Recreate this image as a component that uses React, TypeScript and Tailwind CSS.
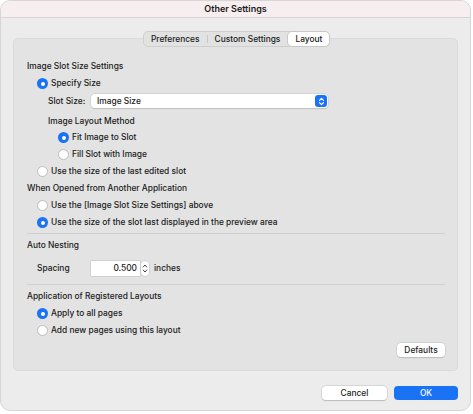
import React from 'react'

const font = { fontFamily: 'Inter, "Liberation Sans", sans-serif' }

function Radio({ checked }: { checked?: boolean }) {
  if (checked) {
    return (
      <span className="w-[11px] h-[11px] rounded-full bg-[#1a73f5] flex items-center justify-center shrink-0">
        <span className="w-[4px] h-[4px] rounded-full bg-white" />
      </span>
    )
  }
  return <span className="w-[11px] h-[11px] rounded-full bg-white border border-[#bdbdbd] shrink-0" />
}

function RadioRow({ label, checked, indent }: { label: string; checked?: boolean; indent: string }) {
  return (
    <div className={`flex items-center gap-[3px] h-[17px] whitespace-nowrap ${indent}`}>
      <Radio checked={checked} />
      <span>{label}</span>
    </div>
  )
}

function Button({ children, primary, className }: { children: React.ReactNode; primary?: boolean; className?: string }) {
  return (
    <div
      className={`h-[14px] rounded-[4px] flex items-center justify-center font-medium ${
        primary
          ? 'bg-[#1a73f5] text-white'
          : 'bg-white text-[#1d1d1d] shadow-[0_0_0_0.5px_#c4c4c4,0_0.5px_1px_#b8b8b8]'
      } ${className ?? ''}`}
    >
      {children}
    </div>
  )
}

export default function App() {
  return (
    <div className="w-[473px] h-[414px] bg-white text-[#1a1a1a] text-[8.4px] font-medium" style={font}>
      <div className="w-[471px] h-[411px] rounded-[10px] bg-[#ececec] border border-[#d6d6d6] overflow-hidden flex flex-col">
        {/* Title bar */}
        <div className="h-[17px] bg-[#f7efef] border-b border-[#d8d4d4] flex items-center justify-center font-semibold text-[9px]">
          Other Settings
        </div>

        <div className="relative flex-1 px-[12px] pt-[20px]">
          {/* Tabs */}
          <div className="absolute left-[142px] top-[13px] h-[16px] flex items-center rounded-[5px] bg-[#e2e2e2] border border-[#cfcfcf] z-10 whitespace-nowrap">
            <span className="px-[7px]">Preferences</span>
            <span className="w-px h-[8px] bg-[#c8c8c8]" />
            <span className="px-[7px]">Custom Settings</span>
            <span className="h-[16px] -my-px -mr-px px-[7px] flex items-center rounded-[5px] bg-white border border-[#c8c8c8]">Layout</span>
          </div>

          {/* Group box */}
          <div className="h-[333px] rounded-[5px] bg-[#e3e3e3] border border-[#dadada] pl-[13px] pr-[12px] pt-[19px] flex flex-col">
            <div className="h-[17px] flex items-center">Image Slot Size Settings</div>
            <RadioRow indent="pl-[10px]" checked label="Specify Size" />
            <div className="flex items-center h-[18px] pl-[21px] whitespace-nowrap">
              <span className="w-[43px]">Slot Size:</span>
              <div className="w-[237px] h-[14px] rounded-[4px] bg-white shadow-[0_0_0_0.5px_#c6c6c6,0_0.5px_1px_#bcbcbc] flex items-center justify-between pl-[6px] pr-[1px]">
                <span>Image Size</span>
                <span className="w-[12px] h-[12px] rounded-[3px] bg-[#1a73f5] flex items-center justify-center">
                  <svg width="7" height="9" viewBox="0 0 7 9" fill="none" stroke="white" strokeWidth="1.2" strokeLinecap="round" strokeLinejoin="round">
                    <path d="M1.5 3.3 3.5 1.3 5.5 3.3" />
                    <path d="M1.5 5.7 3.5 7.7 5.5 5.7" />
                  </svg>
                </span>
              </div>
            </div>
            <div className="h-[19px] flex items-end pl-[21px] pb-[1px]">Image Layout Method</div>
            <RadioRow indent="pl-[31px]" checked label="Fit Image to Slot" />
            <RadioRow indent="pl-[31px]" label="Fill Slot with Image" />
            <RadioRow indent="pl-[10px]" label="Use the size of the last edited slot" />

            <div className="h-[17px] flex items-center">When Opened from Another Application</div>
            <RadioRow indent="pl-[10px]" label="Use the [Image Slot Size Settings] above" />
            <RadioRow indent="pl-[10px]" checked label="Use the size of the slot last displayed in the preview area" />

            <div className="h-px bg-[#d0d0d0] mt-[2px] mb-[3px]" />
            <div className="h-[17px] flex items-center">Auto Nesting</div>
            <div className="flex items-center h-[25px] pl-[10px] pt-[3px]">
              <span className="w-[54px]">Spacing</span>
              <div className="w-[49px] h-[15px] bg-white shadow-[0_0_0_0.5px_#bdbdbd] flex items-center justify-end pr-[3px]">0.500</div>
              <span className="ml-[1px] w-[8px] h-[15px] rounded-[4px] bg-white shadow-[0_0_0_0.5px_#bdbdbd] flex items-center justify-center">
                <svg width="6" height="11" viewBox="0 0 6 11" fill="none" stroke="#444" strokeWidth="1" strokeLinecap="round" strokeLinejoin="round">
                  <path d="M1.2 4 3 2 4.8 4" />
                  <path d="M1.2 7 3 9 4.8 7" />
                </svg>
              </span>
              <span className="ml-[5px]">inches</span>
            </div>

            <div className="h-px bg-[#d0d0d0] mt-[5px] mb-[3px]" />
            <div className="h-[17px] flex items-center">Application of Registered Layouts</div>
            <RadioRow indent="pl-[10px]" checked label="Apply to all pages" />
            <RadioRow indent="pl-[10px]" label="Add new pages using this layout" />
            <div className="flex justify-end mt-[4px]">
              <Button className="w-[48px]">Defaults</Button>
            </div>
          </div>

          {/* Footer buttons */}
          <div className="flex justify-end gap-[7px] mt-[15px]">
            <Button className="w-[65px]">Cancel</Button>
            <Button primary className="w-[64px]">OK</Button>
          </div>
        </div>
      </div>
    </div>
  )
}
